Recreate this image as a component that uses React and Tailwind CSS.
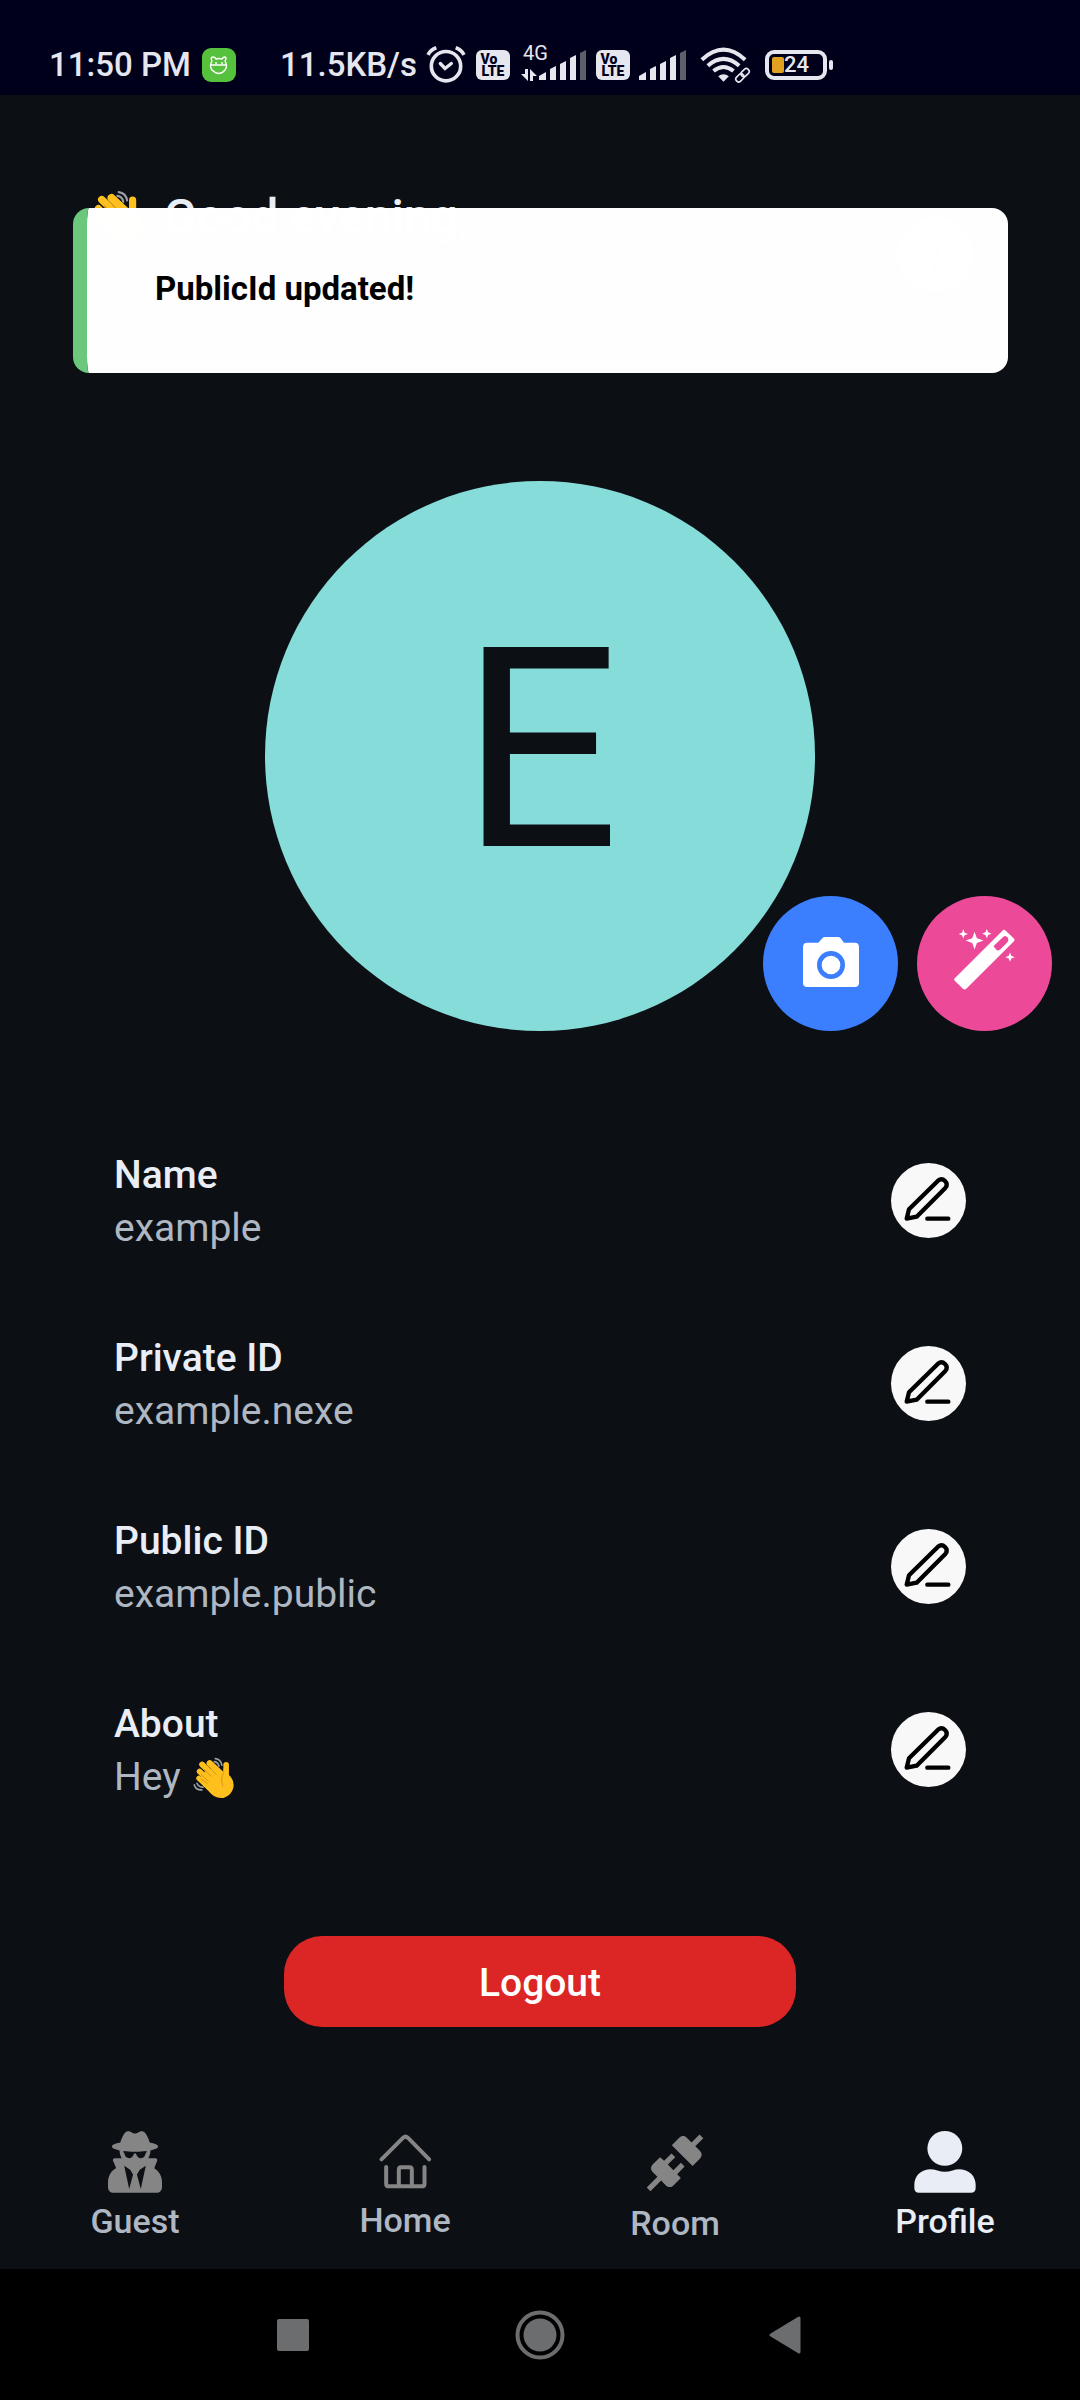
import React from "react";
import { FaUserSecret } from "react-icons/fa";

function WavingHand({ className }) {
  return (
    <svg viewBox="312 196 126 128" className={className} role="img" aria-label="waving hand">
      <g fill="none" stroke="#9aa0a6" strokeWidth="5" strokeLinecap="round">
        <path d="M379 201Q396 203 399 221" />
        <path d="M376 210Q388 212 390 224" />
        <path d="M315 281Q320 297 338 296" />
        <path d="M323 276Q328 288 342 288" />
      </g>
      <g stroke="#ffc01e" strokeLinecap="round" fill="none">
        <path d="M339 219L376 254" strokeWidth="18" />
        <path d="M362 215L396 247" strokeWidth="19" />
        <path d="M331 240L362 270" strokeWidth="17" />
        <path d="M329 261L358 288" strokeWidth="16" />
        <path d="M412 220L412 262" strokeWidth="17" />
      </g>
      <path
        d="M350 235L390 232Q398 246 404 244L404 230L420 250Q438 266 434 290Q428 314 404 321Q382 323 366 308L330 270Z"
        fill="#ffc01e"
      />
      <g stroke="#d99412" strokeWidth="3" strokeLinecap="round" fill="none">
        <path d="M345 234L366 254" />
        <path d="M366 233L382 249" />
        <path d="M336 249L358 270" />
        <path d="M335 263L354 276" />
        <path d="M404 245Q393 262 402 285" />
      </g>
    </svg>
  );
}

function VolteBadge() {
  return (
    <span className="flex h-[30px] w-[34px] flex-col items-center justify-center rounded-md bg-[#e6e6ee] text-[14px] leading-[12px] font-black text-[#00001b]">
      <span className="pr-2">Vo</span>
      <span>LTE</span>
    </span>
  );
}

function SignalBars() {
  return (
    <svg viewBox="0 0 48 32" className="h-8 w-12" aria-hidden="true">
      <g fill="#e6e6ee">
        <path d="M0 31V27L7 23V31Z" />
        <path d="M11 31V20L17 17V31Z" />
        <path d="M21 31V15L27 12V31Z" />
        <path d="M31 31V9L37 6V31Z" />
      </g>
      <path d="M41 31V4L47 1V31Z" fill="#5d5f6b" />
    </svg>
  );
}

function StatusBar() {
  return (
    <div className="flex h-[95px] items-center bg-[#00001b] pt-[34px] pl-[49px] text-[33px] font-medium whitespace-nowrap text-[#e6e6ee]">
      <span className="w-[153px]">11:50 PM</span>
      <svg viewBox="0 0 34 34" className="mr-[44px] size-[34px]" aria-hidden="true">
        <rect width="34" height="34" rx="9" fill="#55c13c" />
        <g fill="none" stroke="#fff" strokeWidth="1.4">
          <path d="M10 13Q8 9 11 9Q13 9 14 11Q17 10 20 11Q21 9 23 9Q25 10 23 13Q26 18 23 22Q17 29 10 22Q7 18 10 13ZM9 17H25" />
          <path d="M13 15H15M19 15H21" />
        </g>
      </svg>
      <span className="w-[146px]">11.5KB/s</span>
      <svg viewBox="50 46 120 110" className="mr-[10px] h-[37px] w-10" aria-hidden="true" fill="none" stroke="#e6e6ee" strokeLinecap="round" strokeWidth="10">
        <circle cx="110" cy="106" r="44" strokeWidth="11" />
        <path d="M93 98L107 113L126 98" />
        <path d="M56 72Q64 57 81 51M164 72Q156 57 139 51" strokeLinecap="butt" strokeWidth="11" />
      </svg>
      <VolteBadge />
      <span className="relative ml-[29px] flex">
        <span className="absolute -top-2 -left-4 text-[20px] leading-6 font-normal">4G</span>
        <svg viewBox="0 0 16 12" className="absolute bottom-0 -left-[18px] h-3 w-4" aria-hidden="true" fill="#e6e6ee">
          <path d="M4 0H7V12L0 5H4ZM9 12V0L16 7H12V12Z" />
        </svg>
        <SignalBars />
      </span>
      <span className="mr-[9px] ml-[9px]">
        <VolteBadge />
      </span>
      <SignalBars />
      <svg viewBox="868 50 152 108" className="ml-[13px] h-9 w-[51px]" aria-hidden="true" fill="none" stroke="#e6e6ee">
        <path d="M873 88Q938 28 1003 88" strokeWidth="12" />
        <path d="M891 106Q938 65 985 106" strokeWidth="12" />
        <path d="M908 122Q938 98 968 122" strokeWidth="12" />
        <path d="M922 138Q938 126 954 138L938 154Z" fill="#e6e6ee" stroke="none" />
        <g transform="rotate(-45 995 134)" strokeWidth="5">
          <rect x="970" y="126" width="27" height="17" rx="8" />
          <rect x="992" y="126" width="27" height="17" rx="8" />
        </g>
      </svg>
      <span className="ml-[14px] flex h-[30px] w-[62px] items-center rounded-[9px] border-4 border-[#e6e6ee] pl-[3px]">
        <span className="h-4 w-3 rounded-xs bg-[#e0a020]" />
        <span className="text-[22px] leading-none">24</span>
      </span>
      <span className="ml-0.5 h-2.5 w-1 rounded-sm bg-[#e6e6ee]" />
    </div>
  );
}

function Header() {
  return (
    <header className="relative flex h-[278px] items-start justify-between pt-[94px] pr-[107px] pl-[90px]">
      <div className="flex items-center gap-5">
        <WavingHand className="size-[54px]" />
        <h1 className="text-[48px] leading-[56px] font-medium">Good evening,</h1>
      </div>
      <button type="button" aria-label="Information" className="mt-7 flex size-[75px] items-center justify-center rounded-full bg-white">
        <svg viewBox="0 0 24 24" className="size-12" aria-hidden="true">
          <circle cx="13" cy="4" r="2" fill="#0c0f14" />
          <path d="M10 10H13L11 20H13" fill="none" stroke="#0c0f14" strokeWidth="2" />
        </svg>
      </button>
      <div role="status" className="absolute top-[113px] right-[72px] left-[73px] flex h-[165px] items-center rounded-2xl border-l-[14px] border-[#6bc77b] bg-white/[0.996] bg-clip-padding pb-1 pl-[68px] text-[33px] font-bold text-black">
        PublicId updated!
      </div>
    </header>
  );
}

function Avatar() {
  return (
    <section className="relative mt-[108px] flex justify-center">
      <div className="flex size-[550px] items-center justify-center rounded-full bg-[#86dcd8] pb-3 text-[280px] leading-none text-[#0c0f14]">E</div>
      <div className="absolute right-[28px] bottom-0 flex gap-[19px]">
        <button type="button" aria-label="Change photo" className="flex size-[135px] items-center justify-center rounded-full bg-[#3b7fff] pb-1">
          <svg viewBox="186 186 168 168" className="size-14" aria-hidden="true">
            <path d="M232 212L244 199Q247 195 252 195H291Q296 195 299 199L309 212H341Q354 212 354 225V332Q354 345 341 345H199Q186 345 186 332V225Q186 212 199 212Z" fill="#fff" />
            <circle cx="270" cy="279" r="35" fill="#fff" stroke="#3b7fff" strokeWidth="14" />
          </svg>
        </button>
        <button type="button" aria-label="Generate avatar" className="flex size-[135px] items-center justify-center rounded-full bg-[#ec4a98] pb-2">
          <svg viewBox="640 178 184 184" className="size-[61px]" aria-hidden="true" fill="#fff">
            <path fillRule="evenodd" d="M643 326L786 183Q791 178 796 183L820 206Q825 211 820 216L677 358Q672 363 667 358L643 335Q638 330 643 326ZM759 230L770 243Q776 243 781 238L801 218Q806 211 802 204Q795 195 788 202Z" />
            <path d="M702 186L709 206L729 213L709 220L702 240L695 220L675 213L695 206Z" />
            <path d="M668 179L672 189L682 193L672 197L668 207L664 197L654 193L664 189Z" />
            <path d="M739 178L743 188L753 192L743 196L739 206L735 196L725 192L735 188Z" />
            <path d="M809 249L813 259L823 263L813 267L809 277L805 267L795 263L805 259Z" />
          </svg>
        </button>
      </div>
    </section>
  );
}

function Field({ label, children }) {
  return (
    <div className="flex items-center justify-between">
      <dl className="pt-1 text-[39px] leading-[53px]">
        <dt className="font-medium">{label}</dt>
        <dd className="flex items-center gap-3 text-[#aeb7c2]">{children}</dd>
      </dl>
      <button type="button" aria-label={"Edit " + label} className="size-[75px] rounded-full bg-[#f8f8f8]">
        <svg viewBox="93 96 225 225" className="size-full" aria-hidden="true" fill="none" stroke="#000" strokeWidth="13" strokeLinecap="round" strokeLinejoin="round">
          <path d="M140 263L147 235L234 149Q245 140 255 150Q265 160 256 171L170 257Z" />
          <path d="M202 263H265" />
        </svg>
      </button>
    </div>
  );
}

const HomeIcon = (
  <svg viewBox="952 68 164 183" className="h-[61px] w-[55px]" aria-hidden="true" fill="none" stroke="#858585" strokeWidth="12" strokeLinecap="round">
    <path d="M962 153L1027 88Q1034 82 1041 88L1105 153" />
    <path d="M976 176V226Q976 234 984 234H1083Q1091 234 1091 226V176" />
    <path d="M1014 234V184Q1014 177 1021 177H1046Q1053 177 1053 184V234" />
  </svg>
);

const RoomIcon = (
  <svg viewBox="0 0 24 24" className="size-16" aria-hidden="true" fill="#858585">
    <path d="M21.4 7.5C22.2 8.3 22.2 9.6 21.4 10.3L18.6 13.1L10.8 5.3L13.6 2.5C14.4 1.7 15.7 1.7 16.4 2.5L18.2 4.3L21.2 1.3L22.6 2.7L19.6 5.7L21.4 7.5M15.6 13.3L14.2 11.9L11.4 14.7L9.3 12.6L12.1 9.8L10.7 8.4L7.9 11.2L6.4 9.8L3.6 12.6C2.8 13.4 2.8 14.7 3.6 15.4L5.4 17.2L1.4 21.2L2.8 22.6L6.8 18.6L8.6 20.4C9.4 21.2 10.7 21.2 11.4 20.4L14.2 17.6L12.8 16.2L15.6 13.3Z" />
  </svg>
);

const ProfileIcon = (
  <svg viewBox="941 64 185 185" className="size-[62px]" aria-hidden="true" fill="#e9edf5">
    <circle cx="1033" cy="116" r="52" />
    <path d="M988 178C960 179 942 200 942 224V234Q942 248 956 248H1111Q1125 248 1125 234V224C1125 200 1107 179 1078 178Q1065 178 1056 182Q1033 189 1011 182Q1000 178 988 178Z" />
  </svg>
);

const tabs = [
  { name: "Guest", icon: <FaUserSecret className="h-[62px] w-[54px] text-[#858585]" aria-hidden="true" /> },
  { name: "Home", icon: HomeIcon },
  { name: "Room", icon: RoomIcon },
  { name: "Profile", icon: ProfileIcon, active: true },
];

export default function App() {
  return (
    <div className="flex min-h-screen flex-col bg-[#0c0f14] font-['Roboto',sans-serif] text-[#e9edf5]">
      <StatusBar />
      <main className="flex flex-col">
        <Header />
        <Avatar />
        <section className="mt-[114px] flex flex-col gap-[73px] px-[114px]">
          <Field label="Name">example</Field>
          <Field label="Private ID">example.nexe</Field>
          <Field label="Public ID">example.public</Field>
          <Field label="About">
            Hey <WavingHand className="size-[42px]" />
          </Field>
        </section>
        <button type="button" className="mt-[132px] h-[91px] w-[512px] self-center rounded-[38px] bg-[#dc2626] pt-1 text-[39px] font-medium text-white">
          Logout
        </button>
      </main>
      <nav className="mt-auto grid h-[138px] grid-cols-4 items-start text-[34px] leading-[56px] font-medium">
        {tabs.map((tab) => (
          <a
            key={tab.name}
            href={"#" + tab.name.toLowerCase()}
            aria-current={tab.active ? "page" : undefined}
            className={tab.active ? "flex flex-col items-center text-[#e9edf5]" : "flex flex-col items-center text-[#aeb7c2]"}
          >
            {tab.icon}
            <span>{tab.name}</span>
          </a>
        ))}
      </nav>
      <footer className="flex h-[131px] items-center justify-center gap-[204px] bg-black">
        <button type="button" aria-label="Recent apps">
          <svg viewBox="0 0 36 36" className="size-9" aria-hidden="true">
            <rect x="2" y="2" width="32" height="32" rx="2" fill="#6c6d6f" />
          </svg>
        </button>
        <button type="button" aria-label="Home screen">
          <svg viewBox="0 0 50 50" className="size-[50px]" aria-hidden="true">
            <circle cx="25" cy="25" r="22.5" fill="none" stroke="#6c6d6f" strokeWidth="4" />
            <circle cx="25" cy="25" r="16.5" fill="#6c6d6f" />
          </svg>
        </button>
        <button type="button" aria-label="Back">
          <svg viewBox="2 0 36 38" className="h-[38px] w-9" aria-hidden="true">
            <path d="M4 19L32 2V36Z" fill="#6c6d6f" stroke="#6c6d6f" strokeWidth="3" strokeLinejoin="round" />
          </svg>
        </button>
      </footer>
    </div>
  );
}
